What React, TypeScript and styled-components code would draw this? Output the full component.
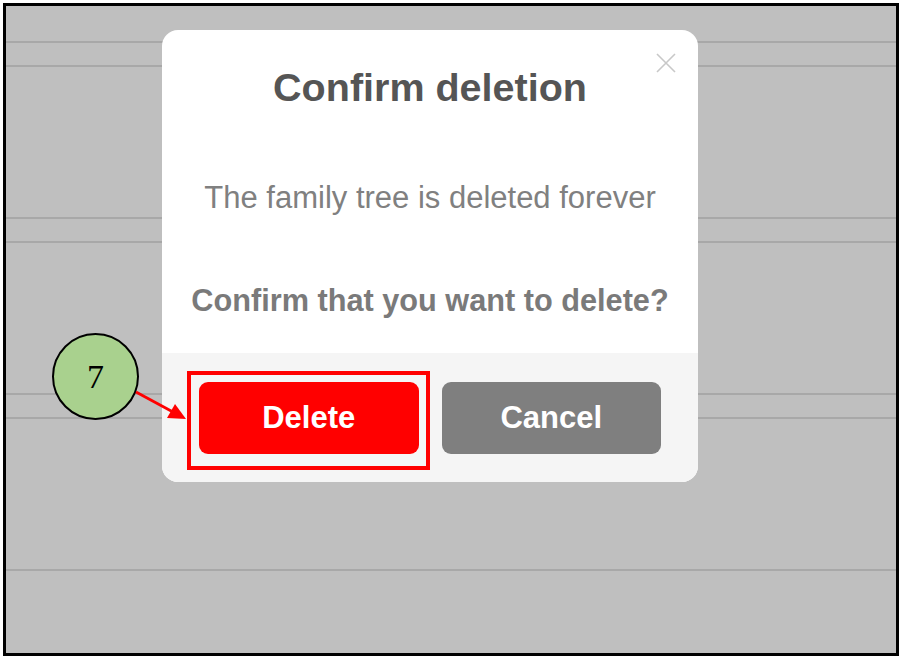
import styled, { createGlobalStyle } from "styled-components";

const GlobalStyle = createGlobalStyle`
	* {
		box-sizing: border-box;
	}
	body {
		margin: 0;
		background: #ffffff;
		font-family: "Liberation Sans", Arial, sans-serif;
	}
`;

const ROWS = [35, 22, 150, 22, 150, 22, 150];

export default function App() {
	return (
		<>
			<GlobalStyle />
			<Screen>
				<Frame>
					<Table>
						{ROWS.map((h, i) => (
							<TableRow key={i} $height={h} />
						))}
					</Table>

					<Modal>
						<CloseButton aria-label="close">
							<svg width="22" height="22" viewBox="0 0 22 22">
								<path d="M2 2 L20 20 M20 2 L2 20" stroke="#c8c8c8" strokeWidth="1.6" fill="none" />
							</svg>
						</CloseButton>
						<Body>
							<Title>Confirm deletion</Title>
							<Message>The family tree is deleted forever</Message>
							<Question>Confirm that you want to delete?</Question>
						</Body>
						<Footer>
							<ActionButton $variant="danger">Delete</ActionButton>
							<ActionButton $variant="neutral">Cancel</ActionButton>
						</Footer>
					</Modal>
				</Frame>

				<StepBadge>7</StepBadge>
				<Arrow width="60" height="40" viewBox="0 0 60 40">
					<line x1="3" y1="3" x2="40" y2="23" stroke="#ff0000" strokeWidth="2.8" />
					<polygon points="53,30 34,29 42,15" fill="#ff0000" />
				</Arrow>
				<Highlight />
			</Screen>
		</>
	);
}

const Screen = styled.div`
	position: relative;
	width: 903px;
	height: 659px;
	padding: 3px 5px 3px 3px;
`;

const Frame = styled.div`
	position: relative;
	width: 896px;
	height: 653px;
	border: 3px solid #000;
	background: #bfbfbf;
	overflow: hidden;
`;

const Table = styled.div`
	display: flex;
	flex-direction: column;
`;

const TableRow = styled.div<{ $height: number }>`
	height: ${({ $height }) => $height + 2}px;
	border-bottom: 2px solid #a8a8a8;
`;

const Modal = styled.div`
	position: absolute;
	left: 156px;
	top: 24px;
	width: 536px;
	height: 452px;
	background: #fff;
	border-radius: 16px;
	overflow: hidden;
	display: flex;
	flex-direction: column;
`;

const CloseButton = styled.button`
	position: absolute;
	top: 22px;
	right: 21px;
	width: 22px;
	height: 22px;
	padding: 0;
	border: none;
	background: none;
	display: flex;
	cursor: pointer;
`;

const Body = styled.div`
	height: 323px;
	padding-top: 34px;
	display: flex;
	flex-direction: column;
	align-items: center;
	text-align: center;
`;

const Title = styled.h2`
	margin: 0;
	font-size: 39.5px;
	line-height: 46px;
	font-weight: 700;
	color: #555555;
`;

const Message = styled.p`
	margin: 70px 0 0;
	font-size: 31px;
	line-height: 36px;
	color: #808080;
`;

const Question = styled.p`
	margin: 67px 0 0;
	font-size: 30.7px;
	line-height: 36px;
	font-weight: 700;
	color: #7a7a7a;
`;

const Footer = styled.div`
	flex: 1;
	background: #f5f5f5;
	display: flex;
	gap: 23px;
	padding: 29px 37px 28px;
`;

const ActionButton = styled.button<{ $variant: "danger" | "neutral" }>`
	flex: 1;
	height: 72px;
	border: none;
	border-radius: 9px;
	font-family: inherit;
	font-size: 31px;
	font-weight: 700;
	color: #fff;
	background: ${({ $variant }) => ($variant === "danger" ? "#ff0000" : "#7f7f7f")};
	cursor: pointer;
`;

const StepBadge = styled.div`
	position: absolute;
	left: 52px;
	top: 333px;
	width: 87px;
	height: 87px;
	border-radius: 50%;
	border: 2px solid #000;
	background: #a9d18e;
	display: flex;
	align-items: center;
	justify-content: center;
	font-family: "Liberation Serif", "Times New Roman", serif;
	font-size: 34px;
	color: #000;
`;

const Arrow = styled.svg`
	position: absolute;
	left: 133px;
	top: 389px;
`;

const Highlight = styled.div`
	position: absolute;
	left: 187px;
	top: 371px;
	width: 243px;
	height: 99px;
	border: 4px solid #ff0000;
`;
